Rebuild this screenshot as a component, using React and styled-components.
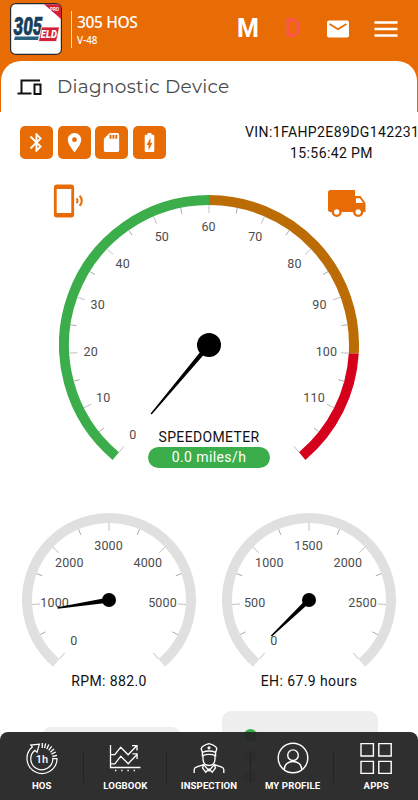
import React from 'react';
import styled, { createGlobalStyle } from 'styled-components';

const GlobalStyle = createGlobalStyle`
  * { box-sizing: border-box; }
  html, body { margin: 0; background: #fff; overflow: hidden; }
  body { font-family: Roboto, sans-serif; color: #111; }
  svg { display: block; }
`;

const Screen = styled.div`
  position: relative;
  width: 418px;
  height: 800px;
  overflow: hidden;
  background: linear-gradient(#e86c05 0 112px, #fff 112px);
`;
const Header = styled.header`
  display: flex;
  align-items: center;
  height: 61px;
  padding: 0 20px 3px 10px;
`;
const Brand = styled.div`
  margin-left: 9px;
  padding: 0 0 0 5px;
  height: 37px;
  border-left: 1px solid #ffd9b8;
  color: #fff;
`;
const BrandName = styled.div`
  font: 500 15.6px/23px "Noto Sans", sans-serif;
  letter-spacing: -0.4px;
  white-space: nowrap;
`;
const BrandVersion = styled.div`
  font: 500 9.8px/14px "Noto Sans", sans-serif;
`;
const HeaderActions = styled.div`
  display: flex;
  align-items: center;
  margin-left: auto;
`;
const Letter = styled.span`
  width: ${p => p.$w}px;
  margin-right: ${p => p.$gap}px;
  text-align: center;
  font: 700 25px/28px Roboto, sans-serif;
  color: ${p => p.$color};
`;
const MenuIcon = styled.svg`
  margin-left: 23px;
`;
const Card = styled.main`
  width: 416px;
  margin-left: 1px;
  height: 739px;
  background: #fff;
  border-radius: 20px 20px 0 0;
`;
const TitleRow = styled.div`
  display: flex;
  align-items: center;
  height: 51px;
  padding-left: 16px;
`;
const Title = styled.h1`
  margin: 0 0 0 14px;
  font: 400 18.5px/24px "Montserrat", Inter, sans-serif;
  letter-spacing: 0.3px;
  color: #4a4a4a;
  white-space: nowrap;
`;
const StatusRow = styled.div`
  display: flex;
  justify-content: space-between;
  height: 60px;
  padding: 14px 0 0 19px;
`;
const Badges = styled.div`
  display: flex;
  gap: 4.7px;
`;
const Badge = styled.div`
  display: flex;
  align-items: center;
  justify-content: center;
  width: 33px;
  height: 33px;
  border-radius: 5px;
  background: #e86c05;
`;
const Vehicle = styled.div`
  width: 173px;
  margin: -4px -1px 0 0;
  font-size: 14px;
  line-height: 20.5px;
  letter-spacing: 0.4px;
  text-align: center;
  white-space: nowrap;
`;
const Main = styled.section`
  position: relative;
  height: 300px;
  padding: 23px 0 0 58px;
`;
const Corner = styled.div`
  position: absolute;
  left: ${p => p.$x}px;
  top: ${p => p.$y}px;
`;
const Readout = styled.div`
  position: absolute;
  left: 147px;
  top: 255px;
  width: 122px;
  text-align: center;
  font-size: 14px;
  line-height: 20px;
  letter-spacing: 0.35px;
`;
const Pill = styled.div`
  height: 21px;
  border-radius: 11px;
  background: #3bae4b;
  color: #fff;
  line-height: 21px;
  letter-spacing: 0.4px;
`;
const Pair = styled.section`
  display: flex;
  gap: 26px;
  padding: 40.5px 0 0 21px;
`;
const SmallGauge = styled.div`
  width: 174px;
  text-align: center;
  font-size: 14px;
  line-height: 20px;
  letter-spacing: 0.4px;
`;
const Caption = styled.div`
  margin-top: 4.5px;
`;
const Panels = styled.div`
  display: flex;
  align-items: flex-start;
  gap: 41px;
  padding: 20px 0 0 41px;
`;
const Panel = styled.div`
  display: flex;
  flex-direction: column;
  gap: 8px;
  width: ${p => p.$w}px;
  height: 90px;
  margin-top: ${p => p.$top}px;
  padding: 18px 22px;
  border-radius: 9px;
  background: #eee;
`;
const Dot = styled.div`
  width: 13px;
  height: 13px;
  border-radius: 50%;
  background: ${p => p.$color};
`;
const BottomBar = styled.nav`
  position: absolute;
  left: 0;
  right: 0;
  bottom: 0;
  display: flex;
  height: 68px;
  border-radius: 8px 8px 0 0;
  background: rgba(39, 39, 40, 0.96);
`;
const Tab = styled.div`
  position: relative;
  display: flex;
  flex: 1;
  flex-direction: column;
  align-items: center;
  padding-top: 9px;
  color: #fff;
  font: 700 9.6px/13px Roboto, sans-serif;
  letter-spacing: 0.1px;
  white-space: nowrap;
  &:not(:last-child)::after {
    content: '';
    position: absolute;
    right: 0;
    top: 20px;
    width: 1px;
    height: 31px;
    background: #222;
  }
`;
const TabLabel = styled.span`
  margin-top: 4px;
`;

const polar = (c, r, deg) => {
  const a = (deg * Math.PI) / 180;
  return [c + r * Math.sin(a), c - r * Math.cos(a)];
};

function Gauge({ radius, height, bands, max, step, labelRadius, labels, needle, needleLength, hub }) {
  const c = radius;
  const mid = radius - 5;
  const angle = v => -140 + (280 * v) / max;
  const arc = (from, to) => {
    const [x1, y1] = polar(c, mid, angle(from));
    const [x2, y2] = polar(c, mid, angle(to));
    const large = angle(to) - angle(from) > 180 ? 1 : 0;
    return `M${x1} ${y1}A${mid} ${mid} 0 ${large} 1 ${x2} ${y2}`;
  };
  const ticks = Array.from({ length: (max / step) * 2 + 1 }, (_, i) => i);
  const [tx, ty] = polar(c, needleLength, needle);
  const [ax, ay] = polar(c, 1.8, needle + 90);
  const [bx, by] = polar(c, 1.8, needle - 90);
  return (
    <svg width={radius * 2} height={height} viewBox={`0 0 ${radius * 2} ${height}`}>
      {bands.map(([from, to, color]) => (
        <path key={from} d={arc(from, to)} fill="none" stroke={color} strokeWidth="10" />
      ))}
      {ticks.map(i => {
        const a = angle((i * step) / 2);
        const [x1, y1] = polar(c, radius - 10, a);
        const [x2, y2] = polar(c, radius - (i % 2 ? 16 : 18), a);
        return <line key={i} x1={x1} y1={y1} x2={x2} y2={y2} stroke={i % 2 ? '#aaa' : '#c0c0c0'} strokeWidth="1" />;
      })}
      {labels.map((v, i) => {
        const [x, y] = polar(c, labelRadius, angle(i * step));
        return (
          <text key={v} x={x - 0.4} y={y + 4} textAnchor="middle" fontFamily="Roboto" fontSize="12.5" letterSpacing="0.15" fill="#4c4c4c">{v}</text>
        );
      })}
      <path d={`M${ax} ${ay}L${tx} ${ty}L${bx} ${by}Z`} fill="#000" stroke="#000" strokeWidth="1.4" />
      <circle cx={c} cy={c} r={hub} fill="#000" />
    </svg>
  );
}

const Logo = () => (
  <svg width="52" height="52" viewBox="0 0 52 52">
    <rect x="0.6" y="0.6" width="50.8" height="50.8" rx="5" fill="#fff" stroke="#27292e" strokeWidth="1.2" />
    <path d="M34 1.2H47a4 4 0 0 1 4 4V16Z" fill="#d51f35" />
    <text x="40" y="7.8" fontFamily="Roboto" fontWeight="700" fontSize="4.5" fill="#fff">PRO</text>
    <text x="3.5" y="32" fontFamily="Roboto" fontWeight="900" fontStyle="italic" fontSize="25" textLength="29" lengthAdjust="spacingAndGlyphs" fill="#173f5c" stroke="#173f5c" strokeWidth="0.6">305</text>
    <path d="M5 33.5H29l-1 3.5H4Z" fill="#29617f" />
    <path d="M31.5 24H49.5l-3 14.5H28.5Z" fill="#d51f35" stroke="#fff" strokeWidth="0.8" />
    <text x="30.8" y="35" fontFamily="Roboto" fontWeight="900" fontStyle="italic" fontSize="10" textLength="16" lengthAdjust="spacingAndGlyphs" fill="#fff">ELD</text>
  </svg>
);

const icons = {
  bluetooth: 'M17.71 7.71 12 2h-1v7.59L6.41 5 5 6.41 10.59 12 5 17.59 6.41 19 11 14.41V22h1l5.71-5.71-4.3-4.29 4.3-4.29zM13 5.83l1.88 1.88L13 9.59V5.83zm1.88 10.46L13 18.17v-3.76l1.88 1.88z',
  pin: 'M12 2C8.13 2 5 5.13 5 9c0 5.25 7 13 7 13s7-7.75 7-13c0-3.87-3.13-7-7-7zm0 9.5a2.5 2.5 0 0 1 0-5 2.5 2.5 0 0 1 0 5z',
  sd: 'M18 2h-8L4.02 8 4 20c0 1.1.9 2 2 2h12c1.1 0 2-.9 2-2V4c0-1.1-.9-2-2-2zm-6 6h-2V4h2v4zm3 0h-2V4h2v4zm3 0h-2V4h2v4z',
  battery: 'M15.67 4H14V2h-4v2H8.33C7.6 4 7 4.6 7 5.33v15.33C7 21.4 7.6 22 8.33 22h7.33c.74 0 1.34-.6 1.34-1.33V5.33C17 4.6 16.4 4 15.67 4zM11 20v-5.5H9L13 7v5.5h2L11 20z',
};
const Material = ({ d, size = 24 }) => (
  <svg width={size} height={size} viewBox="0 0 24 24" fill="#fff"><path d={d} /></svg>
);
const Line = ({ children, w = 1.2 }) => (
  <svg width="34" height="34" viewBox="0 0 34 34" fill="none" stroke="#fff" strokeWidth={w}>{children}</svg>
);

const HosIcon = () => (
  <Line>
    <path d="M7.3 6A15 15 0 1 0 32 17.7h-4.2A11 11 0 1 1 10 9.2l2 2.2 2.4-8.2-8.6.9Z" />
    <path d="M17.3 2v5M20.6 2.4l-1 4.8M23.8 3.5l-2 4.6M26.7 5.4l-3 4M29 8l-3.7 3.2M30.8 11l-4.4 2.2M32 14.4l-4.6 1.1" strokeWidth="1.3" />
    <text x="17" y="21.7" textAnchor="middle" fontFamily="Roboto" fontWeight="500" fontSize="11" fill="#fff" stroke="none">1h</text>
  </Line>
);
const LogbookIcon = () => (
  <Line w={1.3}>
    <path d="M2.5 4V26.5H32.5M3 13.7H6.8L12.7 6.2l7.4 7.6L28.5 5M3 22.8H6.8l6-7.6 7.4 7.5 8.6-9M24 4.6h5v5M24.5 12.9h4.6v5" />
    <path d="M7 29.5h23" strokeDasharray="1.4 4.8" />
  </Line>
);
const OfficerIcon = () => (
  <Line w={1.35}>
    <path d="M9.2 8Q9.2 5 17 2.7 24.8 5 24.8 8L23.6 11.3Q17 8.8 10.4 11.3ZM10.4 11.3v3.4Q17 12 23.6 14.7v-3.4M11 14.7v3.6c0 8.2 12 8.2 12 0v-3.6" />
    <path d="M2.2 32v-3.2q0-2 2-2.7l7.6-2.6L17 30l5.2-6.5 7.6 2.6q2 .7 2 2.7V32M11.8 23.5 10.5 27l3.3 4.2L17 28l3.2 3.2 3.3-4.2-1.3-3.5" />
    <circle cx="17" cy="6.8" r="0.9" />
  </Line>
);
const ProfileIcon = () => (
  <Line w={1.4}>
    <circle cx="17" cy="17" r="14.8" />
    <circle cx="17" cy="14.2" r="5.3" />
    <path d="M8.2 28.7c0-11 17.6-11 17.6 0" />
  </Line>
);
const AppsIcon = () => (
  <Line w={1.4}>
    <path d="M2 2.6h12.4V15H2ZM19.8 2.6h12.4V15H19.8ZM2 20.4h12.4v12H2ZM19.8 20.4h12.4v12H19.8Z" />
  </Line>
);

const tabs = [
  ['HOS', HosIcon],
  ['LOGBOOK', LogbookIcon],
  ['INSPECTION', OfficerIcon],
  ['MY PROFILE', ProfileIcon],
  ['APPS', AppsIcon],
];

export default function App() {
  const gray = '#e0e0e0';
  return (
    <Screen>
      <GlobalStyle />
      <Header>
        <Logo />
        <Brand>
          <BrandName>305 HOS</BrandName>
          <BrandVersion>V-48</BrandVersion>
        </Brand>
        <HeaderActions>
          <Letter $w={24} $gap={23} $color="#fff">M</Letter>
          <Letter $w={20} $gap={23} $color="#fb5748">D</Letter>
          <svg width="25" height="20" viewBox="0 0 25 20">
            <rect x="1" y="1.5" width="22" height="17" rx="2" fill="#fff" />
            <path d="m3.5 5 8.5 5.2L20.5 5" fill="none" stroke="#e86c05" strokeWidth="1.8" />
          </svg>
          <MenuIcon width="24" height="18" viewBox="0 0 24 18">
            <path d="M0.5 2.5h23M0.5 9h23M0.5 15.5h23" stroke="#fff" strokeWidth="2.4" />
          </MenuIcon>
        </HeaderActions>
      </Header>
      <Card>
        <TitleRow>
          <svg width="26" height="20" viewBox="0 0 26 20" fill="none" stroke="#111" strokeWidth="2">
            <path d="M23 3.5H4.5V15.5M0.5 16.5H14.5M17.5 7.5h6v9.5h-6Z" />
          </svg>
          <Title>Diagnostic Device</Title>
        </TitleRow>
        <StatusRow>
          <Badges>
            {Object.entries(icons).map(([name, d]) => (
              <Badge key={name}><Material d={d} size={23} /></Badge>
            ))}
          </Badges>
          <Vehicle>
            <div>VIN:1FAHP2E89DG142231</div>
            <div>15:56:42 PM</div>
          </Vehicle>
        </StatusRow>
        <Main>
          <Gauge
            radius={150}
            height={268}
            max={120}
            step={10}
            bands={[[0, 60, '#3bae4b'], [60, 100, '#bc6c05'], [100, 120, '#d5001c']]}
            labels={[0, 10, 20, 30, 40, 50, 60, 70, 80, 90, 100, 110]}
            labelRadius={118}
            needle={-140}
            needleLength={90}
            hub={12}
          />
          <Corner $x={52} $y={12}>
            <svg width="32" height="34" viewBox="0 0 32 34" fill="none" stroke="#e86c05">
              <rect x="2.3" y="2" width="17.4" height="30" rx="1.5" strokeWidth="2.8" />
              <path d="M3 3.5h16M3 30.5h16" strokeWidth="3" />
              <path d="M23.6 14.3q1.8 2.3 0 4.8M26.6 11.6q4.4 5 0 10.2" strokeWidth="2" />
            </svg>
          </Corner>
          <Corner $x={327} $y={17}>
            <svg width="38" height="29" viewBox="0 0 38 29">
              <path fill="#e86c05" d="M2.5 1H27V7h5.5l5 7v9H2.5A2.5 2.5 0 0 1 0 20.5v-17A2.5 2.5 0 0 1 2.5 1Z" />
              <path fill="#fff" d="M28 9.3h3.9l3.2 4.6H28Z" />
              <circle cx="8.7" cy="23" r="3.9" fill="#fff" stroke="#e86c05" strokeWidth="2.4" />
              <circle cx="30.2" cy="23" r="3.9" fill="#fff" stroke="#e86c05" strokeWidth="2.4" />
            </svg>
          </Corner>
          <Readout>
            <div>SPEEDOMETER</div>
            <Pill>0.0 miles/h</Pill>
          </Readout>
        </Main>
        <Pair>
          <SmallGauge>
            <Gauge radius={87} height={154} max={6000} step={1000} bands={[[0, 6000, gray]]}
              labels={[0, 1000, 2000, 3000, 4000, 5000]} labelRadius={54} needle={-98.8} needleLength={52} hub={7} />
            <Caption>RPM: 882.0</Caption>
          </SmallGauge>
          <SmallGauge>
            <Gauge radius={87} height={154} max={3000} step={500} bands={[[0, 3000, gray]]}
              labels={[0, 500, 1000, 1500, 2000, 2500]} labelRadius={54} needle={-133.7} needleLength={52} hub={7} />
            <Caption>EH: 67.9 hours</Caption>
          </SmallGauge>
        </Pair>
        <Panels>
          <Panel $w={139} $top={16} />
          <Panel $w={156} $top={0}>
            <Dot $color="#35ad48" />
            <Dot $color="#e8a0a8" />
            <Dot $color="#e8a0a8" />
          </Panel>
        </Panels>
      </Card>
      <BottomBar>
        {tabs.map(([label, Icon]) => (
          <Tab key={label}>
            <Icon />
            <TabLabel>{label}</TabLabel>
          </Tab>
        ))}
      </BottomBar>
    </Screen>
  );
}
